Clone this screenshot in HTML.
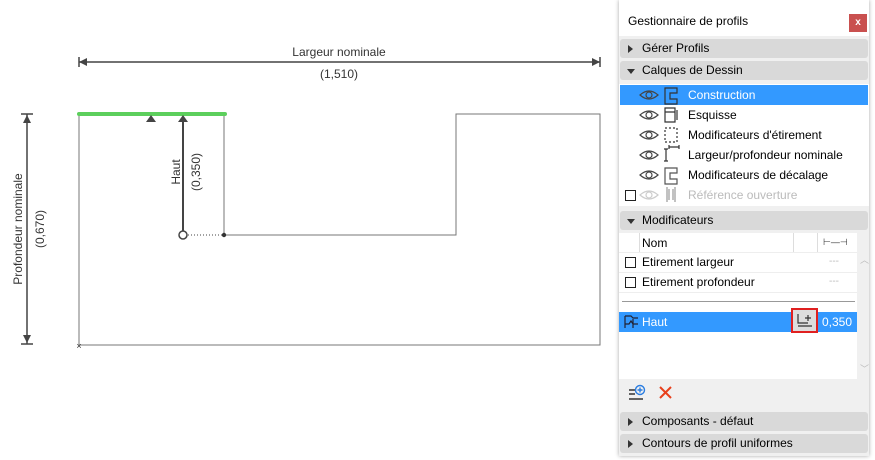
<!DOCTYPE html>
<html><head><meta charset="utf-8"><style>
body{margin:0;width:875px;height:460px;background:#fff;position:relative;overflow:hidden;font-family:"Liberation Sans",sans-serif;}
.p{position:absolute;left:619px;top:0;width:250px;height:456px;background:#f0f0f0;box-shadow:0 0 4px rgba(0,0,0,.35);font-size:12px;color:#000}
.a{position:absolute}
.h{position:absolute;left:1px;width:248px;height:19px;background:#d9d9d9;border-radius:3px;line-height:19px}
.h span{position:absolute;left:22px}
.tri{position:absolute;left:8px;top:6px;width:0;height:0;border-top:4px solid transparent;border-bottom:4px solid transparent;border-left:5px solid #333}
.tdn{position:absolute;left:7px;top:8px;width:0;height:0;border-left:4px solid transparent;border-right:4px solid transparent;border-top:5px solid #333}
.r{position:absolute;left:1px;width:248px;height:20px;line-height:20px}
.r span{position:absolute;left:68px}
.cb{position:absolute;width:9px;height:9px;border:1px solid #222;background:#fff}
</style></head><body>
<svg width="620" height="460" style="position:absolute;left:0;top:0" font-family="Liberation Sans, sans-serif">
<g stroke="#444" stroke-width="1.5">
<line x1="79" y1="62" x2="600" y2="62"/><line x1="79" y1="57" x2="79" y2="67"/><line x1="600" y1="57" x2="600" y2="67"/>
<line x1="27" y1="114" x2="27" y2="344"/><line x1="21" y1="114" x2="33" y2="114"/><line x1="21" y1="344" x2="33" y2="344"/>
</g>
<polygon points="79,62 87,58 87,66" fill="#444"/><polygon points="600,62 592,58 592,66" fill="#444"/>
<polygon points="27,115 23,123 31,123" fill="#444"/><polygon points="27,343 23,335 31,335" fill="#444"/>
<text x="339" y="56" font-size="12" text-anchor="middle" fill="#333">Largeur nominale</text>
<text x="339" y="78" font-size="12" text-anchor="middle" fill="#333">(1,510)</text>
<text transform="translate(22,229) rotate(-90)" font-size="12" text-anchor="middle" fill="#333">Profondeur nominale</text>
<text transform="translate(44,229) rotate(-90)" font-size="12" text-anchor="middle" fill="#333">(0,670)</text>
<polyline points="79,114 224,114 224,235 456,235 456,114 600,114 600,345 79,345 79,114" fill="none" stroke="#777" stroke-width="1"/>
<line x1="79" y1="114" x2="225" y2="114" stroke="#5ccf5c" stroke-width="4" stroke-linecap="round"/>
<polygon points="151,115 146,122 156,122" fill="#444"/><polygon points="183,115 178,122 188,122" fill="#444"/>
<line x1="183" y1="120" x2="183" y2="231" stroke="#444" stroke-width="2"/>
<circle cx="183" cy="235" r="4" fill="#fff" stroke="#444" stroke-width="1.5"/>
<line x1="188" y1="235" x2="223" y2="235" stroke="#444" stroke-width="1" stroke-dasharray="1,2"/>
<circle cx="224" cy="235" r="2.2" fill="#333"/>
<text transform="translate(180,172) rotate(-90)" font-size="12" text-anchor="middle" fill="#333">Haut</text>
<text transform="translate(200,172) rotate(-90)" font-size="12" text-anchor="middle" fill="#333">(0,350)</text>
<text x="79" y="349" font-size="9" text-anchor="middle" fill="#333">×</text>
</svg>
<div class="p">
<div class="a" style="left:0;top:0;width:250px;height:36px;background:#fff"></div>
<div class="a" style="left:9px;top:14px">Gestionnaire de profils</div>
<div class="a" style="left:230px;top:14px;width:18px;height:18px;background:#c9504f;color:#fff;font-size:10px;text-align:center;line-height:17px;font-weight:bold">x</div>
<div class="h" style="top:39px"><div class="tri"></div><span>Gérer Profils</span></div>
<div class="h" style="top:61px"><div class="tdn"></div><span>Calques de Dessin</span></div>
<div class="a" style="left:0;top:84px;width:250px;height:122px;background:#fff"></div>
<div class="r" style="top:85px;background:#3399ff;color:#fff"><span>Construction</span></div>
<div class="r" style="top:105px"><span>Esquisse</span></div>
<div class="r" style="top:125px"><span>Modificateurs d'étirement</span></div>
<div class="r" style="top:145px"><span>Largeur/profondeur nominale</span></div>
<div class="r" style="top:165px"><span>Modificateurs de décalage</span></div>
<div class="r" style="top:185px;color:#bbb"><span>Référence ouverture</span></div>
<div class="cb" style="left:6px;top:190px"></div>
<svg class="a" style="left:20px;top:85px" width="50" height="120" fill="none" stroke-width="1.2">
<g stroke="#444"><path d="M1 10 Q10 2 19 10 Q10 18 1 10Z"/><circle cx="10" cy="10" r="3"/></g>
<g stroke="#444" transform="translate(0,20)"><path d="M1 10 Q10 2 19 10 Q10 18 1 10Z"/><circle cx="10" cy="10" r="3"/></g>
<g stroke="#444" transform="translate(0,40)"><path d="M1 10 Q10 2 19 10 Q10 18 1 10Z"/><circle cx="10" cy="10" r="3"/></g>
<g stroke="#444" transform="translate(0,60)"><path d="M1 10 Q10 2 19 10 Q10 18 1 10Z"/><circle cx="10" cy="10" r="3"/></g>
<g stroke="#444" transform="translate(0,80)"><path d="M1 10 Q10 2 19 10 Q10 18 1 10Z"/><circle cx="10" cy="10" r="3"/></g>
<g stroke="#ccc" transform="translate(0,100)"><path d="M1 10 Q10 2 19 10 Q10 18 1 10Z"/><circle cx="10" cy="10" r="3"/></g>
<path d="M26 3h12v5h-7v6h7v5h-12z" stroke="#333"/>
<path d="M26 23h10v14h-10zM26 27h10M38 25v10" stroke="#333"/>
<path d="M26 43h12v14h-12z" stroke="#333" stroke-dasharray="2,2"/>
<path d="M27 64v12M25 64h4M25 76h4M30 62h10M30 60v4M40 60v4" stroke="#333"/>
<path d="M26 83h12v5h-7v6h7v5h-12z" stroke="#555"/>
<path d="M28 102v15M36 102v15M30 104v11M34 104v11" stroke="#999"/>
</svg>
<div class="h" style="top:211px"><div class="tdn"></div><span>Modificateurs</span></div>
<div class="a" style="left:0;top:233px;width:238px;height:146px;background:#fff"></div>
<div class="a" style="left:20px;top:233px;width:1px;height:20px;background:#ddd"></div>
<div class="a" style="left:174px;top:233px;width:1px;height:20px;background:#ddd"></div>
<div class="a" style="left:198px;top:233px;width:1px;height:20px;background:#ddd"></div>
<div class="a" style="left:23px;top:236px">Nom</div>
<div class="a" style="left:204px;top:237px;font-size:9px;color:#333">⊢—⊣</div>
<div class="a" style="left:0;top:252px;width:238px;height:1px;background:#eee"></div>
<div class="cb" style="left:6px;top:257px"></div><div class="a" style="left:23px;top:255px">Etirement largeur</div><div class="a" style="left:210px;top:256px;color:#bbb;font-size:10px">---</div>
<div class="a" style="left:0;top:272px;width:238px;height:1px;background:#eee"></div>
<div class="cb" style="left:6px;top:277px"></div><div class="a" style="left:23px;top:275px">Etirement profondeur</div><div class="a" style="left:210px;top:276px;color:#bbb;font-size:10px">---</div>
<div class="a" style="left:0;top:292px;width:238px;height:1px;background:#eee"></div>
<div class="a" style="left:3px;top:301px;width:233px;height:1px;background:#999"></div>
<div class="a" style="left:0;top:312px;width:238px;height:20px;background:#3399ff;color:#fff"><span style="position:absolute;left:23px;top:3px">Haut</span><span style="position:absolute;left:203px;top:3px">0,350</span></div>
<svg class="a" style="left:5px;top:314px" width="15" height="15" fill="none" stroke="#223" stroke-width="1.2"><path d="M1 2h6l2 2h5M1 2v12M1 10h4l2-3 2 3h5M9 5v9"/></svg>
<div class="a" style="left:172px;top:308px;width:27px;height:25px;border:2px solid #e02020;box-sizing:border-box;background:#ddd"></div>
<svg class="a" style="left:177px;top:312px" width="18" height="17" fill="none" stroke="#333" stroke-width="1.2"><path d="M2 2v9h10M9 6h6M12 3v6M2 14h14"/></svg>
<div class="a" style="left:241px;top:253px;font-size:9px;color:#bbb">︿</div>
<div class="a" style="left:241px;top:362px;font-size:9px;color:#bbb">﹀</div>
<svg class="a" style="left:9px;top:384px" width="50" height="20" fill="none" stroke-width="1.4"><path d="M1 6h6M1 10h6M1 15h14" stroke="#333"/><circle cx="12" cy="6" r="4.5" stroke="#2a7de1"/><path d="M12 3.5v5M9.5 6h5" stroke="#2a7de1"/><path d="M32 3l11 11M43 3l-11 11" stroke="#e8401c" stroke-width="2"/></svg>
<div class="h" style="top:412px"><div class="tri"></div><span>Composants - défaut</span></div>
<div class="h" style="top:434px"><div class="tri"></div><span>Contours de profil uniformes</span></div>
</div>
</body></html>
